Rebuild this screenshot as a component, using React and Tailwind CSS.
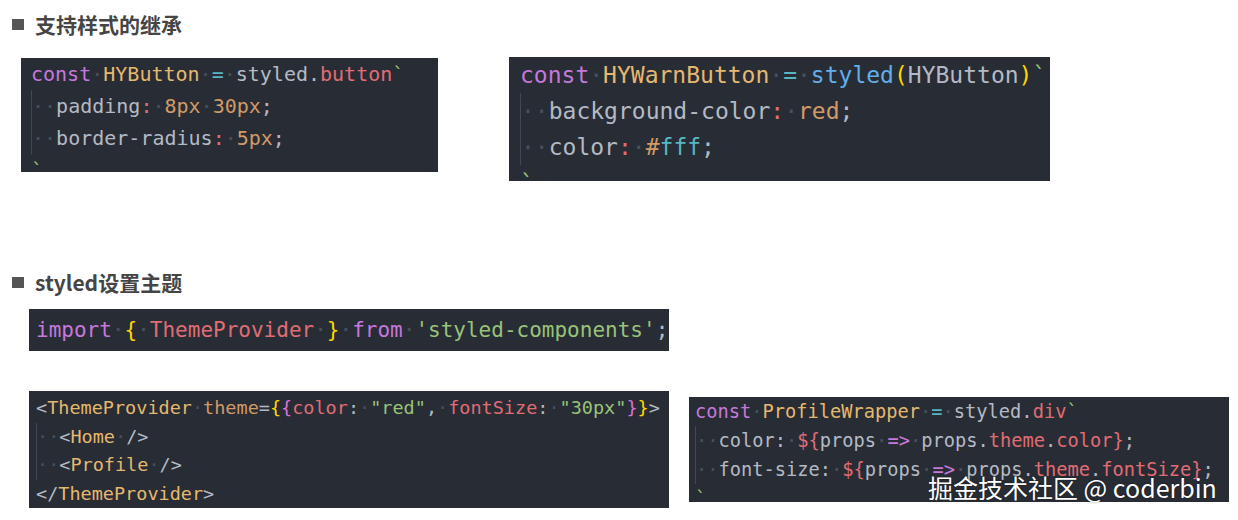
import React from 'react'

const COLORS = {
  P: 'text-[#c678dd]',
  O: 'text-[#d19a66]',
  Y: 'text-[#e5b86f]',
  C: 'text-[#56b6c2]',
  W: 'text-[#b4bac5]',
  R: 'text-[#e06c75]',
  B: 'text-[#61afef]',
  G: 'text-[#98c379]',
  K: 'text-[#ffd700]',
  M: 'text-[#da70d6]',
}

const MONO = { fontFamily: '"DejaVu Sans Mono", "Liberation Mono", monospace' }

// ' ' = dim whitespace dot, '|' = indent guide + dot
function Line({ tokens }) {
  return (
    <div className="flex whitespace-pre">
      {tokens.map((t, i) => {
        if (t === ' ') return <span key={i} className="text-[#4a505c]">·</span>
        if (t === '|') return <span key={i} className="text-[#4a505c] border-l border-[#434854]">·</span>
        const [text, c] = t
        return <span key={i} className={COLORS[c]}>{text}</span>
      })}
    </div>
  )
}

function CodeBlock({ lines, className }) {
  return (
    <div className={`bg-[#282c34] overflow-hidden shrink-0 ${className}`} style={MONO}>
      {lines.map((l, i) => <Line key={i} tokens={l} />)}
    </div>
  )
}

function Heading({ children, className }) {
  return (
    <div
      className={`flex items-center h-[28px] pl-[12px] ${className}`}
      style={{ fontFamily: '"Noto Sans CJK SC", "Noto Sans", sans-serif' }}
    >
      <span className="w-[12px] h-[11px] bg-[#555555]" />
      <span className="ml-[11px] text-[21px] font-bold text-[#454545] leading-none">{children}</span>
    </div>
  )
}

const BLOCK1 = [
  [['const', 'P'], ' ', ['HYButton', 'Y'], ' ', ['=', 'C'], ' ', ['styled', 'W'], ['.', 'W'], ['button', 'R'], ['`', 'G']],
  ['|', ' ', ['padding', 'W'], [':', 'R'], ' ', ['8px', 'O'], ' ', ['30px', 'O'], [';', 'W']],
  ['|', ' ', ['border-radius', 'W'], [':', 'R'], ' ', ['5px', 'O'], [';', 'W']],
  [['`', 'G']],
]

const BLOCK2 = [
  [['const', 'P'], ' ', ['HYWarnButton', 'Y'], ' ', ['=', 'C'], ' ', ['styled', 'B'], ['(', 'K'], ['HYButton', 'W'], [')', 'K'], ['`', 'G']],
  ['|', ' ', ['background-color', 'W'], [':', 'R'], ' ', ['red', 'O'], [';', 'W']],
  ['|', ' ', ['color', 'W'], [':', 'R'], ' ', ['#', 'O'], ['fff', 'C'], [';', 'W']],
  [['`', 'G']],
]

const BLOCK3 = [
  [['import', 'P'], ' ', ['{', 'K'], ' ', ['ThemeProvider', 'R'], ' ', ['}', 'K'], ' ', ['from', 'P'], ' ', ["'styled-components'", 'G'], [';', 'W']],
]

const BLOCK4 = [
  [['<', 'W'], ['ThemeProvider', 'Y'], ' ', ['theme', 'O'], ['=', 'W'], ['{', 'K'], ['{', 'M'], ['color', 'R'], [':', 'W'], ' ', ['"red"', 'G'], [',', 'W'], ' ', ['fontSize', 'R'], [':', 'W'], ' ', ['"30px"', 'G'], ['}', 'M'], ['}', 'K'], ['>', 'W']],
  ['|', ' ', ['<', 'W'], ['Home', 'Y'], ' ', ['/>', 'W']],
  ['|', ' ', ['<', 'W'], ['Profile', 'Y'], ' ', ['/>', 'W']],
  [['</', 'W'], ['ThemeProvider', 'Y'], ['>', 'W']],
]

const BLOCK5 = [
  [['const', 'P'], ' ', ['ProfileWrapper', 'Y'], ' ', ['=', 'C'], ' ', ['styled', 'W'], ['.', 'W'], ['div', 'R'], ['`', 'G']],
  ['|', ' ', ['color', 'W'], [':', 'W'], ' ', ['${', 'R'], ['props', 'W'], ' ', ['=>', 'P'], ' ', ['props', 'W'], ['.', 'W'], ['theme', 'R'], ['.', 'W'], ['color', 'R'], ['}', 'R'], [';', 'W']],
  ['|', ' ', ['font-size', 'W'], [':', 'W'], ' ', ['${', 'R'], ['props', 'W'], ' ', ['=>', 'P'], ' ', ['props', 'W'], ['.', 'W'], ['theme', 'R'], ['.', 'W'], ['fontSize', 'R'], ['}', 'R'], [';', 'W']],
  [['`', 'G']],
]

export default function App() {
  return (
    <div className="relative w-[1238px] h-[520px] bg-white overflow-hidden">
      <Heading className="mt-[10px]">支持样式的继承</Heading>

      <div className="flex items-start mt-[19px]">
        <CodeBlock
          lines={BLOCK1}
          className="ml-[21px] mt-[1px] w-[417px] h-[114px] pl-[10px] text-[20px] leading-[32px]"
        />
        <CodeBlock
          lines={BLOCK2}
          className="ml-[71px] w-[541px] h-[124px] pl-[11px] text-[23px] leading-[36px]"
        />
      </div>

      <Heading className="mt-[87px]">styled设置主题</Heading>

      <CodeBlock
        lines={BLOCK3}
        className="ml-[29px] mt-[13px] w-[640px] h-[42px] pl-[7px] pt-[6px] text-[21px] leading-[30px]"
      />

      <div className="flex items-start mt-[40px]">
        <CodeBlock
          lines={BLOCK4}
          className="ml-[29px] w-[640px] h-[117px] pl-[7px] pt-[3px] text-[18.5px] leading-[28.7px]"
        />
        <CodeBlock
          lines={BLOCK5}
          className="ml-[20px] mt-[6px] w-[540px] h-[105px] pl-[6px] text-[18.7px] leading-[29px]"
        />
      </div>

      {/* watermark */}
      <div
        className="absolute left-[928px] top-[475px] text-[25px] leading-none text-white whitespace-pre [text-shadow:0_0_2px_rgba(0,0,0,0.5)]"
        style={{ fontFamily: '"Noto Sans CJK SC", "Noto Sans", sans-serif' }}
      >
        掘金技术社区 @ coderbin
      </div>
    </div>
  )
}
